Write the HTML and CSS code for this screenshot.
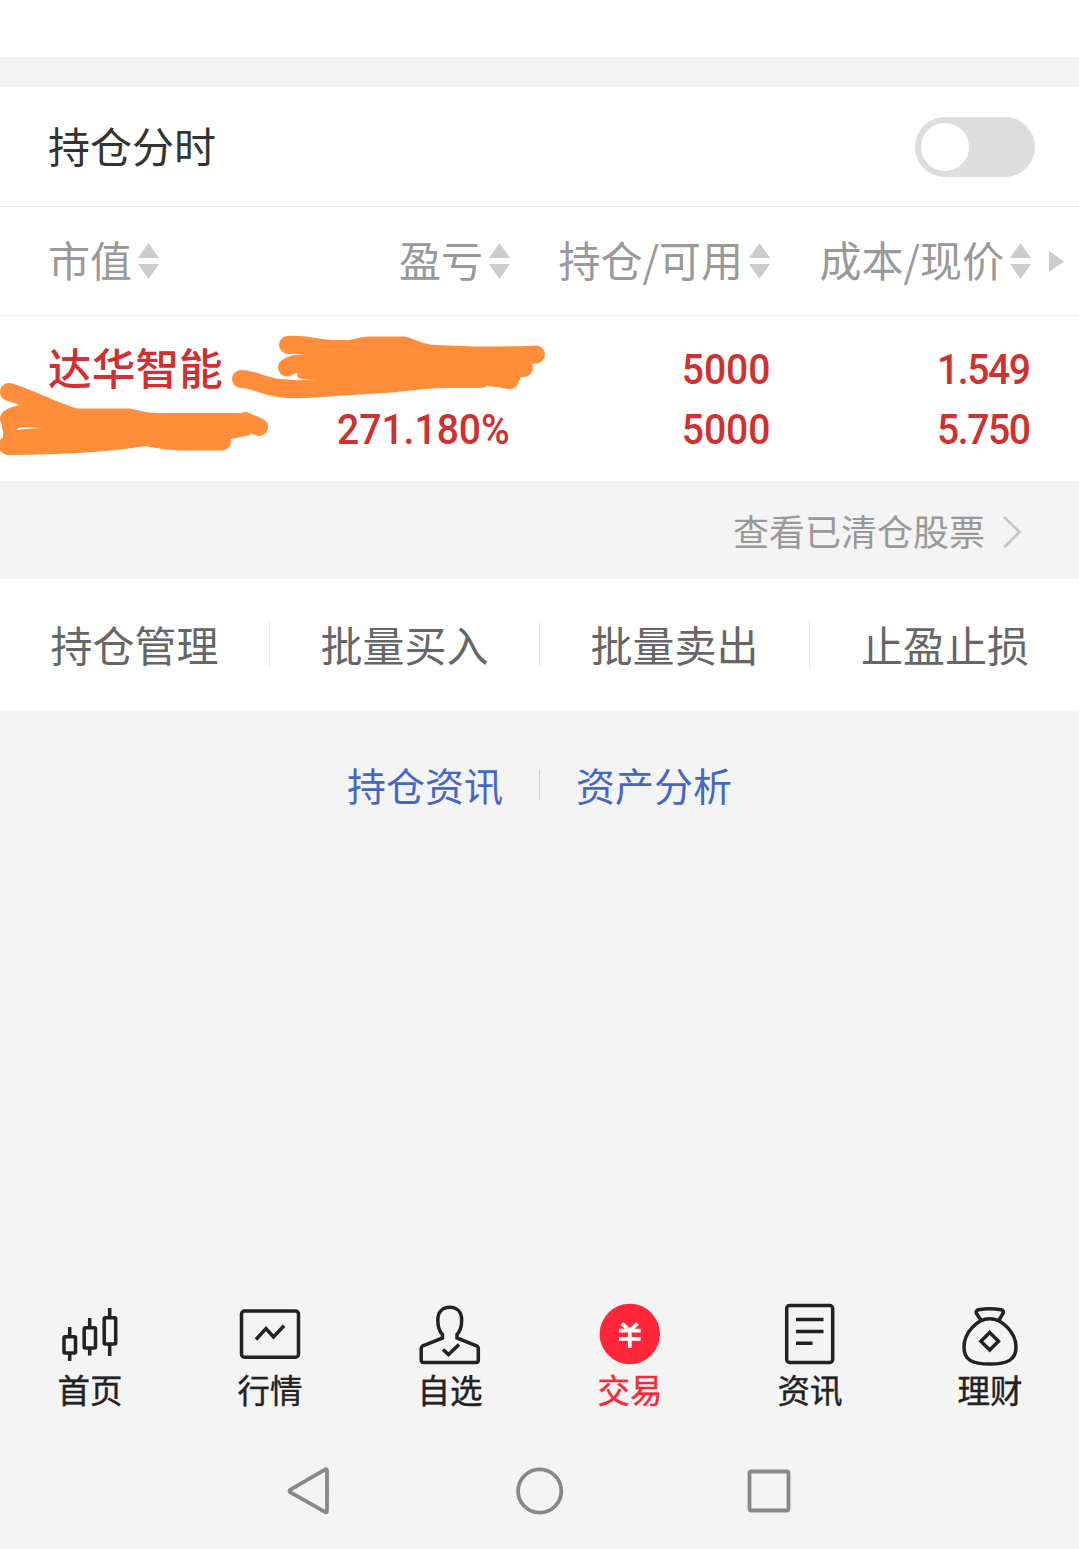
FILE: index.html
```html
<!DOCTYPE html>
<html lang="zh-CN">
<head>
    <meta charset="UTF-8">
    <meta name="viewport" content="width=device-width, initial-scale=1.0">
    <title>持仓</title>
    <link rel="stylesheet" href="styles.css">
</head>
<body>

    <main>
        <div class="top-strip"></div>

        <!-- Holdings chart switch -->
        <section class="switch-row">
            <span>持仓分时</span>
            <span class="switch"><span class="knob"></span></span>
        </section>

        <!-- Holdings table -->
        <section class="holdings">
            <div class="grid head">
                <div class="cell left"><span>市值</span><svg class="sort" viewBox="0 0 21 36"><path d="M10.500 0L21 15H0zM0 21H21L10.500 36z"/></svg></div>
                <div class="cell"><span>盈亏</span><svg class="sort" viewBox="0 0 21 36"><path d="M10.500 0L21 15H0zM0 21H21L10.500 36z"/></svg></div>
                <div class="cell"><span>持仓/可用</span><svg class="sort" viewBox="0 0 21 36"><path d="M10.500 0L21 15H0zM0 21H21L10.500 36z"/></svg></div>
                <div class="cell"><span>成本/现价</span><svg class="sort" viewBox="0 0 21 36"><path d="M10.500 0L21 15H0zM0 21H21L10.500 36z"/></svg></div>
                <svg class="more" viewBox="0 0 15 21"><path d="M0 0L15 10.500L0 21z"/></svg>
            </div>
            <div class="grid stock">
                <div class="stock-name">达华智能</div>
                <div class="num profit"><span>271.180%</span></div>
                <div class="num"><span>5000</span><span>5000</span></div>
                <div class="num price"><span>1.549</span><span>5.750</span></div>
                <!-- hidden amounts -->
                <svg class="scribble" viewBox="0 316 560 165">
                    <path class="stroke" d="M9 392C25 396 50 410 80 419M9 419Q12 414 30 413.500M8 444.500V446C50 446 100 445 145 437Q165 441 180 441.500H222M245 421L259 427"/>
                    <path d="M2 415L20 405L77 408.500H128C139 410 146 413 158 413H250V435L222 441L147 446L60 448L3 446V431L2 428ZM17 430Q17 427.500 22 427.500Q33 427 40 428.200Q27 428.500 17 430Z" fill-rule="evenodd"/>
                    <path class="stroke" d="M288 345C305 343 318 349 335 349H355M287 367.500C293 363 300 363 315 363M241 379C253 379 262 386 280 388C300 391 320 388 335 387M536 354.500L500 356M524 368H490M510 380L490 377"/>
                    <path d="M315 341L350 340Q362 336.500 370 336.500H403C413 337 422 345 436 345L475 346.500H520V380L487 385.500Q486 388 480 388H445C420 388.500 405 392 385 393L335 396V380H318L303 379Q299 379 297 376L300 355.500L315 354.500L308 353Z"/>
                </svg>
            </div>
        </section>

        <a class="cleared" href="#"><span>查看已清仓股票</span>
            <svg width="20" height="36" viewBox="0 0 20 36"><path d="M2 3L17.500 18L2 33.500"/></svg>
        </a>

        <section class="actions">
            <a href="#">持仓管理</a>
            <a href="#">批量买入</a>
            <a href="#">批量卖出</a>
            <a href="#">止盈止损</a>
        </section>

        <section class="links">
            <a href="#">持仓资讯</a>
            <a href="#">资产分析</a>
        </section>
    </main>

    <!-- Tab bar -->
    <nav class="tabs">
        <a href="#">
            <svg viewBox="0 0 68 68"><path d="M13.700 27V36M13.700 54V61M33.700 18V27M33.700 49V55.500M53.700 8V17M53.700 45V56"/><rect x="8" y="36.700" width="11.500" height="16.300" rx="1"/><rect x="28.200" y="27.700" width="11.300" height="20.300" rx="1"/><rect x="48.200" y="17.700" width="11.500" height="26.300" rx="1"/></svg>
            <span>首页</span>
        </a>
        <a href="#">
            <svg viewBox="0 0 68 68"><rect x="5.500" y="11" width="57" height="46.200" rx="3"/><path d="M20 39.500L30 28.500L37.500 37L48 25.800"/></svg>
            <span>行情</span>
        </a>
        <a href="#">
            <svg viewBox="0 0 68 68"><path d="M26.500 38V34.500C23 31 21.800 26 21.800 20C21.800 12 26.500 7.200 33.700 7.200C41 7.200 45.700 12 45.700 20C45.700 26 44.500 31 41 34.500V38L60 45.500Q62.300 46.500 62.300 48.500V60Q62.300 62.500 60 62.500H7.500Q5.200 62.500 5.200 60V48.500Q5.200 46.500 7.500 45.500Z"/><path d="M27 49.500L32.500 54.500L43 44.500"/></svg>
            <span>自选</span>
        </a>
        <a href="#" class="active">
            <svg viewBox="0 0 68 68"><circle cx="33.800" cy="34" r="30.200"/><path d="M26 23.500L33.800 30.500L41.500 23.500M23 30.600H44.700M23 38.800H44.700M33.800 30V48"/></svg>
            <span>交易</span>
        </a>
        <a href="#">
            <svg viewBox="0 0 68 68"><rect x="10.700" y="5.500" width="46" height="57" rx="3"/><path d="M20 19.400H47.500M20 31.400H47.500M20 43.300H36.500"/></svg>
            <span>资讯</span>
        </a>
        <a href="#">
            <svg viewBox="0 0 68 68"><path d="M25 20L20.500 13.500C19.500 11.500 20.500 10.300 22.500 9.800Q33.700 7.500 45 9.800C47.200 10.300 48 11.500 47 13.500L43 20M33.700 18.700C21 18.700 8 33 8 47C8 60 16 64 33.700 64C51.500 64 60 60 60 47C60 33 46.500 18.700 33.700 18.700Z"/><path d="M33.700 32.500L42.500 41.300L33.700 50.100L24.900 41.300Z"/></svg>
            <span>理财</span>
        </a>
    </nav>

    <!-- System keys -->
    <div class="sys-nav">
        <svg viewBox="0 0 48 48"><path d="M35.500 2.800Q38 1 38 4V43.500Q38 46.500 35.500 44.700L1.500 25.500Q-.5 24 1.500 22.500Z"/></svg>
        <svg viewBox="0 0 48 48"><circle cx="22.700" cy="24" r="21.600"/></svg>
        <svg viewBox="0 0 48 48"><rect x="4.500" y="4.500" width="39" height="39" rx="2"/></svg>
    </div>

</body>
</html>
```

FILE: styles.css
```css
/* General Styling */
* { margin: 0; padding: 0; box-sizing: border-box; }
body {
    height: 1549px;
    display: flex;
    flex-direction: column;
    font-family: "Noto Sans CJK SC", sans-serif;
    font-size: 42px;
    line-height: 1;
    color: #333;
    background: #f4f4f4;
    overflow: hidden;
}
main { flex: 1; }
a { color: inherit; text-decoration: none; }
svg { display: block; flex: none; overflow: visible; }

.top-strip {
    height: 57px;
    margin-bottom: 30px;
    background: #fff;
}

/* Switch */
.switch-row {
    height: 120px;
    padding: 0 44px 0 48px;
    display: flex;
    align-items: center;
    justify-content: space-between;
    background: #fff;
    border-bottom: 1px solid #e9e9e9;
}
.switch-row > span:first-child { padding-bottom: 4px; }
.switch {
    width: 120px;
    height: 60px;
    padding: 6px;
    border-radius: 30px;
    background: #ddd;
}
.knob {
    display: block;
    width: 48px;
    height: 48px;
    border-radius: 50%;
    background: #fff;
}

/* Holdings table */
.holdings { background: #fff; }
.grid {
    display: grid;
    grid-template-columns: 202px 260px 260px 261px 48px;
    padding-left: 48px;
}
.head {
    height: 109px;
    align-items: center;
    color: #999;
    border-bottom: 1px solid #eee;
}
.cell {
    display: flex;
    align-items: center;
    justify-content: flex-end;
    gap: 6px;
    white-space: nowrap;
}
.cell.left { justify-content: flex-start; }
.cell span { padding-bottom: 4px; }
.sort { width: 21px; height: 36px; fill: #ccc; }
.more { width: 15px; height: 21px; margin-left: 18px; fill: #ccc; }

.stock {
    position: relative;
    height: 165px;
    padding-top: 24px;
    color: #d0302f;
}
.stock-name {
    font-size: 43.7px;
    line-height: 53px;
    font-weight: 500;
    white-space: nowrap;
}
.num {
    display: flex;
    flex-direction: column;
    align-items: flex-end;
    font: 500 42px/60px Roboto, sans-serif;
}
.num span {
    transform: scaleX(.93);
    transform-origin: right;
}
.profit { padding-top: 60px; }
.price { padding-right: 1px; letter-spacing: -1.5px; }
.scribble {
    position: absolute;
    left: 0;
    top: 0;
    width: 560px;
    height: 165px;
    fill: #ff8d3a;
}
.scribble .stroke {
    fill: none;
    stroke: #ff8d3a;
    stroke-width: 18;
    stroke-linecap: round;
    stroke-linejoin: round;
}

/* Cleared stocks */
.cleared {
    height: 98px;
    padding: 4px 57px 0 0;
    display: flex;
    align-items: center;
    justify-content: flex-end;
    gap: 17px;
    font-size: 36px;
    color: #999;
}
.cleared span { padding-bottom: 4px; }
.cleared svg { fill: none; stroke: #c4c4c4; stroke-width: 2.500; }

/* Actions */
.actions {
    height: 132px;
    display: grid;
    grid-template-columns: repeat(4, 270px);
    align-items: center;
    color: #666;
    background: #fff;
}
.actions a {
    height: 48px;
    line-height: 45px;
    text-align: center;
    border-right: 1px solid #e9e9e9;
}
.actions a:last-child { border: none; }

.links {
    padding-top: 59px;
    display: flex;
    justify-content: center;
    font-size: 39px;
    color: #4467c5;
}
.links a { height: 30px; line-height: 29px; padding: 0 36px; }
.links a + a { border-left: 1px solid #ccc; }

/* Tab bar */
.tabs {
    height: 140px;
    display: grid;
    grid-template-columns: repeat(6, 180px);
    font-size: 32.5px;
    color: #222;
}
.tabs a {
    display: flex;
    flex-direction: column;
    align-items: center;
}
.tabs span { -webkit-text-stroke: .4px currentColor; }
.tabs svg {
    width: 68px;
    height: 68px;
    margin-bottom: 5px;
    fill: none;
    stroke: #222;
    stroke-width: 3.500;
}
.tabs .active { color: #fb2638; }
.tabs .active circle { fill: #ff2638; stroke: none; }
.tabs .active path { stroke: #fff; stroke-width: 3.700; }

/* System keys */
.sys-nav {
    height: 109px;
    padding: 27px 286px 0 289px;
    display: flex;
    justify-content: space-between;
}
.sys-nav svg {
    width: 48px;
    height: 48px;
    fill: none;
    stroke: #888;
    stroke-width: 3.800;
}
```
